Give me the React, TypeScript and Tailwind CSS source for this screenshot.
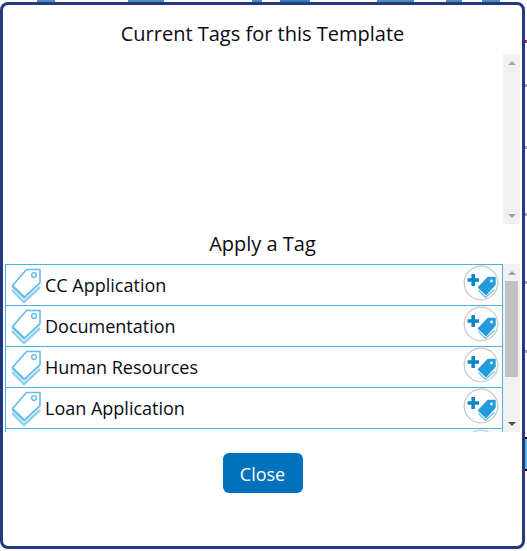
const TAGS = ['CC Application', 'Documentation', 'Human Resources', 'Loan Application', ''];

function TagStackIcon() {
  return (
    <svg width="32" height="38" viewBox="0 0 32 38" fill="none" className="shrink-0 self-start mt-[3px]">
      <path d="M1 22 L13 34 L29 19" stroke="#8fd0ee" strokeWidth="2.4" />
      <path d="M1 18.5 L13 30 L29 15" stroke="#6fc2ea" strokeWidth="1.6" />
      <path d="M1.5 17.5 L15.5 1.5 H29 V14.5 L13.5 29 Z" fill="#fff" stroke="#62bbe8" strokeWidth="1.6" strokeLinejoin="round" />
      <circle cx="23" cy="7" r="2.4" stroke="#62bbe8" strokeWidth="1.4" />
    </svg>
  );
}

function AddTagIcon() {
  return (
    <svg width="36" height="36" viewBox="0 0 36 36" fill="none" className="shrink-0 self-start">
      <circle cx="18" cy="18" r="16.8" fill="#fff" stroke="#c8c8c8" strokeWidth="1.3" />
      <path d="M4.5 15 H16 M10.2 9 V21" stroke="#0f85c9" strokeWidth="3.6" />
      <path d="M15.5 22.5 L25 12.5 H32 V19.5 L23 29.5 Z" fill="#229cdc" stroke="#229cdc" strokeWidth="1.4" strokeLinejoin="round" />
      <circle cx="28.5" cy="16" r="1.4" fill="#fff" />
      <path d="M15.5 25.5 L22.5 32.5 L31.5 24.5" stroke="#62bbe8" strokeWidth="1.2" />
    </svg>
  );
}

function Scrollbar({ className, thumb }: { className: string; thumb?: boolean }) {
  return (
    <div className={`w-[17px] shrink-0 bg-[#f1f1f1] flex flex-col items-center justify-between ${className}`}>
      <div className="h-[17px] w-full flex items-center justify-center">
        <div className="w-0 h-0 border-x-[4px] border-x-transparent border-b-[4px] border-b-[#a3a3a3]" />
      </div>
      {thumb && <div className="w-[13px] h-[96px] bg-[#c1c1c1] mb-auto" />}
      <div className="h-[17px] w-full flex items-center justify-center">
        <div className={`w-0 h-0 border-x-[4px] border-x-transparent border-t-[4px] ${thumb ? 'border-t-[#505050]' : 'border-t-[#a3a3a3]'}`} />
      </div>
    </div>
  );
}

export default function App() {
  return (
    <div className="relative w-[527px] h-[551px] bg-white" style={{ fontFamily: '"Open Sans", sans-serif' }}>
      {/* bits of the page behind the dialog */}
      <div className="flex h-[2px]">
        <div className="ml-[37px] w-[18px] bg-[#4a8fb8]" />
        <div className="ml-[73px] w-[36px] bg-[#4a8fb8]" />
        <div className="ml-[88px] w-[10px] bg-[#4a8fb8]" />
        <div className="ml-[18px] w-[30px] bg-[#2a80c0]" />
        <div className="ml-[67px] w-[37px] bg-[#4a8fb8]" />
        <div className="ml-[32px] w-[16px] bg-[#4a8fb8]" />
        <div className="ml-[20px] w-[18px] bg-[#4a8fb8]" />
      </div>
      <div className="absolute right-0 top-[40px] w-[2px] h-[3px] bg-[#c0303a]" />
      <div className="absolute right-0 top-[84px] w-[2px] h-[3px] bg-[#a8a8a8]" />
      <div className="absolute right-0 top-[146px] w-[2px] h-[3px] bg-[#a8a8a8]" />
      <div className="absolute right-0 top-[213px] w-[2px] h-[3px] bg-[#a8a8a8]" />
      <div className="absolute right-0 top-[281px] w-[2px] h-[3px] bg-[#a8a8a8]" />
      <div className="absolute right-0 top-[350px] w-[2px] h-[3px] bg-[#a8a8a8]" />
      <div className="absolute right-0 top-[437px] w-[2px] h-[34px] bg-[#5fb4ee] border-y-2 border-black" />

      <div className="h-[547px] w-[525px] border-[3px] border-[#26387f] rounded-[8px] bg-white flex flex-col text-[#0a0a14]">
        <h2 className="text-[20px] leading-[27px] text-center pt-[15px]">Current Tags for this Template</h2>

        <div className="flex justify-end pr-[2px] mt-[7px]">
          <Scrollbar className="h-[170px]" />
        </div>

        <h2 className="text-[20px] leading-[27px] text-center mt-[6px]">Apply a Tag</h2>

        <div className="flex pl-[2px] pr-[2px] mt-[7px]">
          <div className="flex-1 h-[168px] overflow-hidden">
            {TAGS.map((tag, i) => (
              <div key={i} className="h-[41px] border-t border-x border-[#4cb2e4] flex items-center pl-[5px] pr-[3px]">
                <TagStackIcon />
                <span className="ml-[2px] text-[18px] leading-[24px] flex-1">{tag}</span>
                <AddTagIcon />
              </div>
            ))}
          </div>
          <Scrollbar className="h-[168px]" thumb />
        </div>

        <div className="flex justify-center mt-[21px]">
          <button className="w-[80px] h-[40px] rounded-[6px] bg-[#0071bc] text-white text-[18px] leading-[42px]">Close</button>
        </div>
      </div>
    </div>
  );
}
